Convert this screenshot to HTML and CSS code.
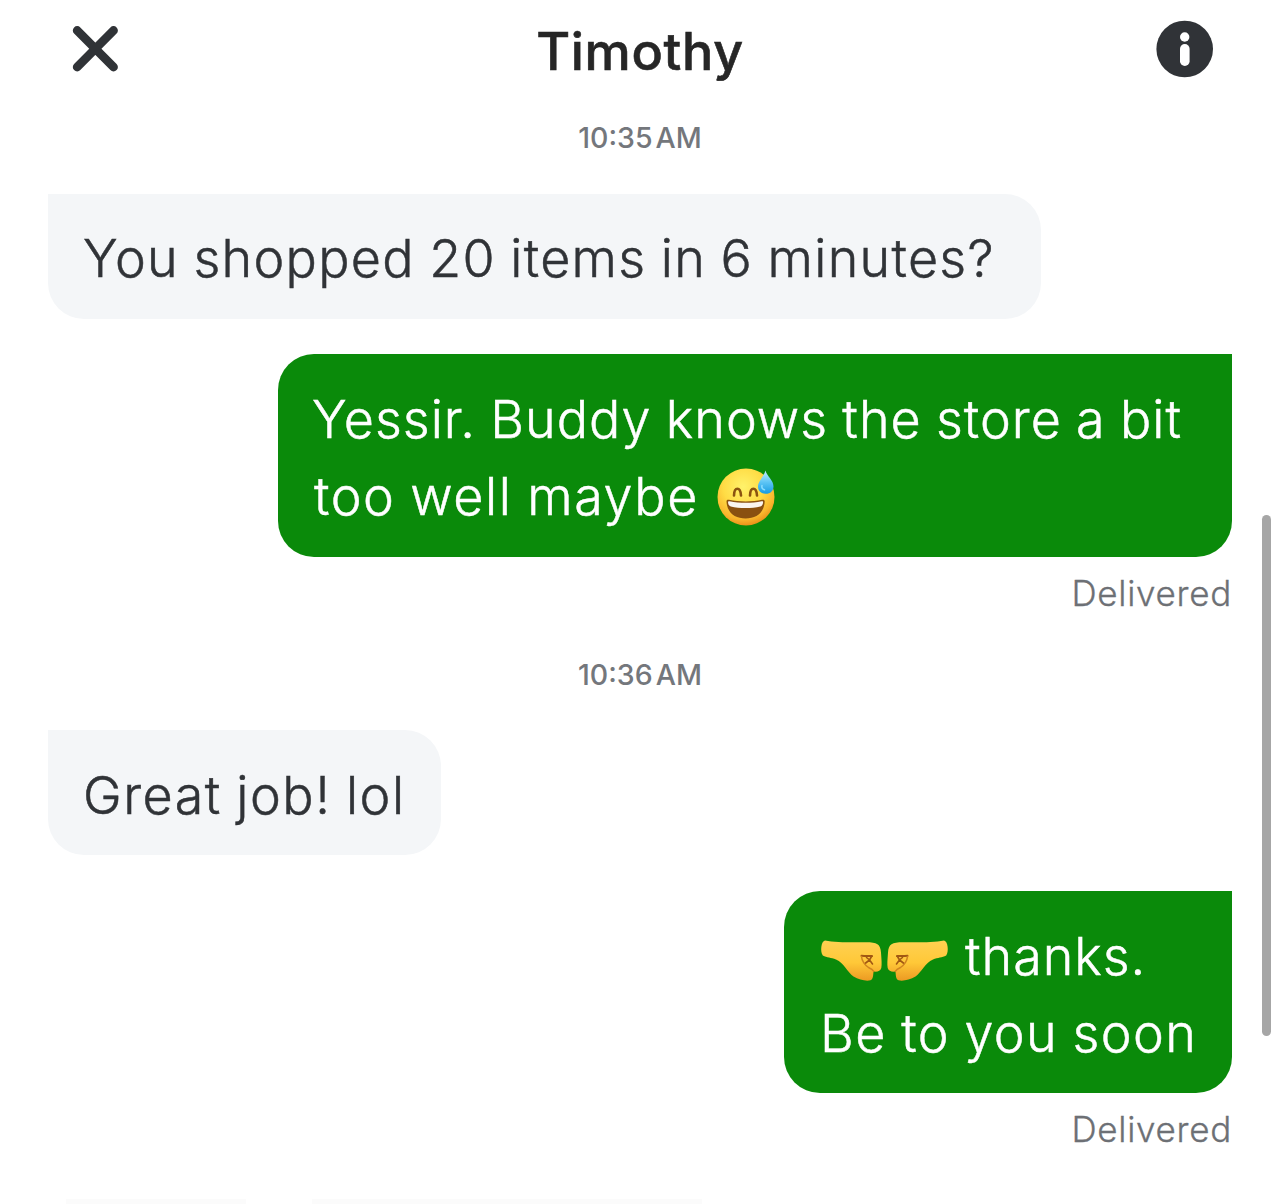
FILE: index.html
```
<!DOCTYPE html>
<html lang="en">
<head>
<meta charset="utf-8">
<title>Timothy</title>
<link rel="stylesheet" href="styles.css">
</head>
<body>
<div class="chat">
  <header class="header">
    <svg class="close" width="48" height="48" viewBox="0 0 48 48" aria-label="Close"><path d="M5.200 5.500 41.500 42M41.500 5.500 5.200 42"/></svg>
    <h1 class="title">Timothy</h1>
    <svg class="info" width="58" height="58" viewBox="0 0 58 58" aria-label="Info"><circle cx="28.700" cy="29" r="28.300" fill="#303337"/><circle cx="28.700" cy="17" r="4.700" fill="#fff"/><rect x="24" y="24" width="9.600" height="22" rx="4.800" fill="#fff"/></svg>
  </header>
  <main class="thread">
    <time class="time">10:35 AM</time>
    <div class="bubble received"><p class="line shopped">You shopped 20 items in 6 minutes?</p></div>
    <div class="bubble sent reply">
      <p class="line yessir">Yessir. Buddy knows the store a bit</p>
      <p class="line well"><span>too well maybe</span>
        <svg class="emoji" width="60" height="60" viewBox="0 0 60 60" aria-label="Grinning face with sweat">
          <defs>
            <radialGradient id="face" cx=".45" cy=".32" r=".7"><stop offset="0" stop-color="#fff26b"/><stop offset=".5" stop-color="#ffdc45"/><stop offset=".82" stop-color="#f9b52c"/><stop offset="1" stop-color="#e98b16"/></radialGradient>
            <linearGradient id="drop" x2="0" y2="1"><stop offset="0" stop-color="#c4efff"/><stop offset=".5" stop-color="#5ec5f5"/><stop offset="1" stop-color="#169be2"/></linearGradient>
          </defs>
          <circle cx="30" cy="31" r="28.500" fill="url(#face)"/>
          <path d="M18 29.500c.3-9 6.400-9 7 0M34 29.500c.3-9 6.400-9 7 0" fill="none" stroke="#8b5410" stroke-width="2.600" stroke-linecap="round"/>
          <path d="M10.500 35.500c0-1.500.8-2 2.500-1.700 10 2.200 23.500 2.200 33 0 1.700-.3 2.700.2 2.700 1.700C48 47 40 52.500 29.600 52.500S11.200 47 10.500 35.500Z" fill="#8a5010"/>
          <path d="M12 36c0-.8.6-1 1.500-.8 10.500 2.200 22.200 2.200 32.200 0 1-.2 1.500.2 1.400 1-.3 2.500-1 3.600-2.800 4.200-8.500 2.100-21 2.100-29.500 0-1.900-.6-2.600-1.900-2.800-4.400Z" fill="#faf5ef"/>
          <path d="M49.500 4.500C51 10.500 57.500 14 57.500 20.500c0 4.500-3.200 7.300-7.700 7.300s-7.800-2.800-7.800-7.300c0-5.500 6-10 7.500-16Z" fill="url(#drop)"/>
          <path d="M46 19.500c-.5 2.200.5 3.800 2.500 4.300" fill="none" stroke="#8adcff" stroke-width="1.500" stroke-linecap="round"/>
        </svg>
      </p>
    </div>
    <p class="status">Delivered</p>
    <time class="time second">10:36 AM</time>
    <div class="bubble received short"><p class="line great">Great job! lol</p></div>
    <div class="bubble sent thanks">
      <p class="line thx">
        <svg class="fists" width="130" height="44" viewBox="0 0 130 44" aria-label="Fist bump">
          <defs>
            <linearGradient id="skin" x2="0" y2="1"><stop offset="0" stop-color="#ffd152"/><stop offset=".55" stop-color="#ffc838"/><stop offset="1" stop-color="#ec9a23"/></linearGradient>
            <g id="fist">
              <path d="M5 1.500C16 3.800 34 3.300 46 3.300c11 0 14.500 2 15 10.200.5 7 1 12 .3 15.500-1 3.500-4.300 4-7.800 3.500-.3 4.200-.5 8-3 8.800-4.500 1.200-11.500-.6-17-3.800C27.500 33.200 24 24 16 20.500 11 18.300 7 19 2.800 16.500 0 13 1 2 5 1.500Z" fill="url(#skin)"/>
              <path d="M41.500 16.800c4 .5 8 .2 10.500.3" fill="none" stroke="#a15813" stroke-width="2" stroke-linecap="round"/>
              <path d="M51.500 17.500l-2 3.500 3 4M49.500 21l-4.500 3.500M49 20.500l-2.500-2" fill="none" stroke="#a15813" stroke-width="1.600" stroke-linecap="round"/>
              <path d="M41.500 17.500c.5 5.500 3.500 8.500 7 11 2.500 1 4.200 2 5.300 4" fill="none" stroke="#cf8420" stroke-width="1.500" stroke-linecap="round"/>
            </g>
          </defs>
          <use href="#fist"/><use href="#fist" transform="matrix(-1 0 0 1 129 0)"/>
        </svg>
        <span>thanks.</span>
      </p>
      <p class="line soon">Be to you soon</p>
    </div>
    <p class="status">Delivered</p>
  </main>
  <div class="peek"><span class="peek-a"></span><span class="peek-b"></span></div>
  <div class="scrollbar"></div>
</div>
</body>
</html>
```
FILE: styles.css
```
* { box-sizing: border-box; }
body, h1, p { margin: 0; }
body { background: #fff; font-family: Inter, "Liberation Sans", sans-serif; }
.chat { position: relative; width: 1280px; height: 1204px; overflow: hidden; display: flex; flex-direction: column; background: #fff; }
.header { height: 104px; padding: 0 66px 0 72px; display: grid; grid-template-columns: 58px 1fr 58px; align-items: start; }
.close { margin-top: 25px; fill: none; stroke: #303337; stroke-width: 8.8; stroke-linecap: round; }
.info { margin-top: 20px; }
.title { margin: 19px 6px 0 0; text-align: center; font-size: 52px; line-height: 66px; font-weight: 500; -webkit-text-stroke: 0.6px #262626; color: #262626; letter-spacing: 0.7px; }
.thread { display: flex; flex-direction: column; padding: 0 48px; }
.time { height: 90px; padding-top: 14px; text-align: center; font-size: 28.5px; line-height: 40px; font-weight: 500; color: #74777c; letter-spacing: 0; word-spacing: -4.5px; }
.second { height: 89px; margin-top: 32px; }
.bubble { padding: 26px 36px 22px; font-size: 52px; font-weight: 300; -webkit-text-stroke: 0.5px currentColor; word-spacing: -1.5px; }
.bubble svg { -webkit-text-stroke: 0; }
.line { display: flex; align-items: center; height: 77px; line-height: 77px; white-space: nowrap; }
.received { align-self: flex-start; width: 993px; height: 125px; border-radius: 0 36px 36px 36px; background: #f4f6f8; color: #303337; }
.short { width: 393px; padding-top: 27px; }
.sent { align-self: flex-end; width: 954px; height: 203px; margin-top: 35px; padding-top: 27px; border-radius: 36px 0 36px 36px; background: #0a8a0a; color: #fff; }
.thanks { width: 448px; height: 202px; margin-top: 36px; }
.shopped { letter-spacing: 1.3px; margin-left: -1px; }
.yessir { letter-spacing: 1.05px; margin-left: -2px; }
.well { letter-spacing: 1.6px; }
.great { letter-spacing: 1.5px; margin-left: -1px; }
.thx { letter-spacing: 1px; }
.soon { letter-spacing: 1.4px; }
.emoji { margin-left: 17px; margin-top: -2px; }
.fists { margin-right: 15px; margin-top: 9px; }
.status { height: 52px; padding-top: 15px; text-align: right; font-size: 35px; line-height: 42px; font-weight: 300; -webkit-text-stroke: 0.3px currentColor; color: #6d7075; letter-spacing: 0.7px; }
.peek { position: absolute; left: 66px; bottom: 0; display: flex; gap: 66px; }
.peek span { height: 5px; background: #fbfbfb; }
.peek-a { width: 180px; }
.peek-b { width: 390px; }
.scrollbar { position: absolute; left: 1262px; top: 515px; width: 9px; height: 521px; border-radius: 5px; background: #a6a6a6; }
```
